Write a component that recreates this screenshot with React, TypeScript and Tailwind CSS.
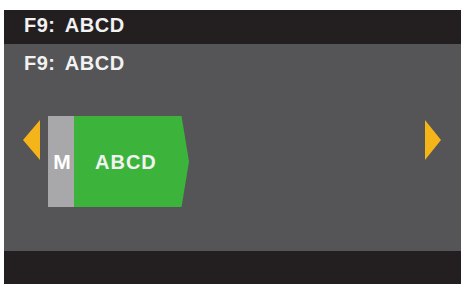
import React from "react";

export default function App() {
  return (
    <div
      className="w-[462px] h-[284px] bg-white pt-[10px] pl-[4px] pr-[1px] overflow-hidden"
      style={{ fontFamily: '"Liberation Sans", Arial, sans-serif' }}
    >
      <div className="flex flex-col h-full">
        <div className="h-[34px] bg-[#231f20] pt-[5px] pl-[20px] shrink-0">
          <span className="block text-[20px] leading-[20px] font-bold text-[#f2f2f2] tracking-[0.5px] [word-spacing:4px]">
            F9: ABCD
          </span>
        </div>
        <div className="flex-1 bg-[#555457] pt-[9px] flex flex-col">
          <span className="block pl-[20px] text-[20px] leading-[20px] font-bold text-[#f2f2f2] tracking-[0.5px] [word-spacing:4px]">
            F9: ABCD
          </span>
          <div className="flex items-start mt-[43px] pl-[19px] pr-[20px]">
            <svg width="17" height="40" viewBox="0 0 17 40" className="mt-[4px]">
              <polygon points="17,0 17,40 0,20" fill="#f4b41a" />
            </svg>
            <div className="flex h-[91px] ml-[8px]">
              <div className="w-[26px] bg-[#a8a7a9] flex items-center justify-center">
                <span className="text-[21px] font-bold text-white leading-none pl-[2px]">M</span>
              </div>
              <div className="w-[115px] bg-[#3cb43c] flex items-center pl-[21px] [clip-path:polygon(0_0,93.5%_0,100%_50%,93.5%_100%,0_100%)]">
                <span className="text-[20px] font-bold text-[#f2f2f2] leading-none tracking-[1px]">ABCD</span>
              </div>
            </div>
            <svg width="16" height="40" viewBox="0 0 16 40" className="mt-[4px] ml-auto">
              <polygon points="0,0 16,20 0,40" fill="#f4b41a" />
            </svg>
          </div>
        </div>
        <div className="h-[33px] bg-[#231f20] shrink-0" />
      </div>
    </div>
  );
}
